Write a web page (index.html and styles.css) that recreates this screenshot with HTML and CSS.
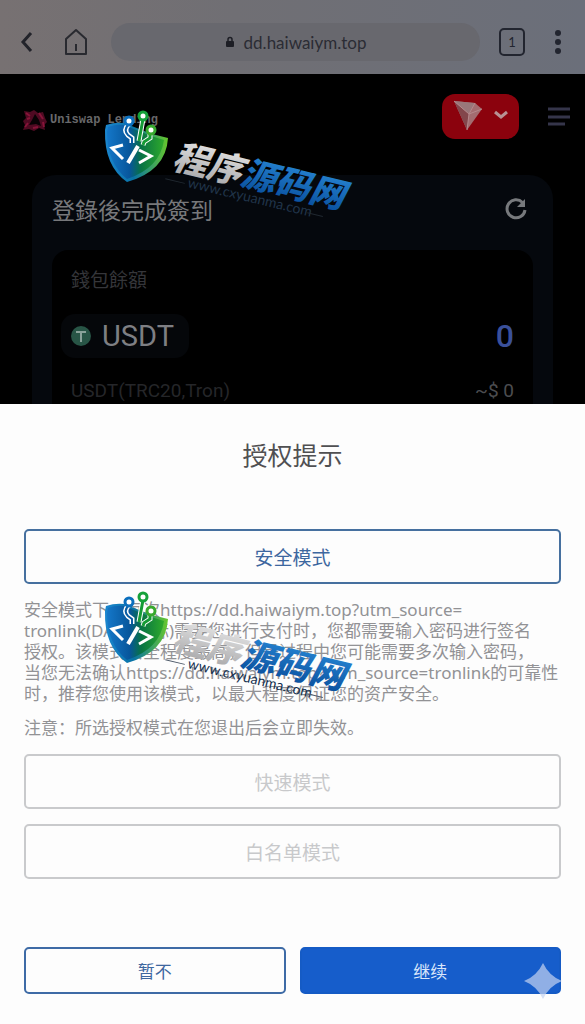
FILE: index.html
```html
<!DOCTYPE html>
<html lang="zh">

<head>
    <meta charset="UTF-8">
    <meta name="viewport" content="width=device-width, initial-scale=1.0">
    <title>授权提示</title>
    <link rel="stylesheet" href="styles.css">
</head>

<body>
    <header class="browser-bar">
        <button class="icon-btn" aria-label="返回">
            <svg width="14" height="22" viewBox="0 0 14 22"><path d="M11 2 3 11l8 9" fill="none" stroke="#22232a" stroke-width="3" /></svg>
        </button>
        <button class="icon-btn home" aria-label="主页">
            <svg width="24" height="28" viewBox="0 0 24 28"><path d="M2 11 12 2l10 9v15H2z" fill="none" stroke="#292a30" stroke-width="2" stroke-linejoin="round" /><path d="M12 16v7" stroke="#292a30" stroke-width="2" /></svg>
        </button>
        <div class="address">
            <svg width="10" height="12" viewBox="0 0 10 12"><path d="M3 5V3.5a2 2 0 0 1 4 0V5" fill="none" stroke="#1d1e25" stroke-width="1.5" /><rect x="1" y="5" width="8" height="6" rx="1" fill="#1d1e25" /></svg>
            <span>dd.haiwaiym.top</span>
        </div>
        <button class="tabs">1</button>
        <button class="icon-btn" aria-label="更多">
            <svg width="8" height="26" viewBox="0 0 8 26" fill="#22252f"><circle cx="4" cy="4" r="3" /><circle cx="4" cy="13" r="3" /><circle cx="4" cy="22" r="3" /></svg>
        </button>
    </header>

    <section class="app">
        <div class="app-header">
            <div class="brand">
                <svg width="26" height="24" viewBox="0 0 26 24">
                    <path d="M2 3l6 1 4-2 4 3 5-1 2 6 2 4-3 3 1 5-6-2-5 3-5-2-6 1 2-5-2-4 3-3z" fill="#4f0a22" />
                    <path d="M13 6l-3 6-3 5 7-1 5 2-2-6z" fill="#080205" />
                    <path d="M4 5l4 3M6 15l-3 4M17 5l4 6M21 14l1 5M11 20l5-1M5 11l3-1" stroke="#871439" stroke-width="2" />
                </svg>
                <span>Uniswap Lending</span>
            </div>
            <button class="network" aria-label="网络">
                <svg width="32" height="34" viewBox="0 0 32 34">
                    <path d="M2 3 23 5l7 6-15 21z" fill="#a36c70" />
                    <path d="M2 3l15 13-2 16z" fill="#83464b" />
                    <path d="M2 3l21 2-6 11z" fill="#99777a" />
                    <path d="M2 3l15 13 6-11M17 16l-2 16M17 16l13-5" fill="none" stroke="#b5898c" stroke-width="1" />
                </svg>
                <svg width="16" height="10" viewBox="0 0 16 10"><path d="M2 2l6 5 6-5" fill="none" stroke="#b79194" stroke-width="3" /></svg>
            </button>
            <button class="icon-btn" aria-label="菜单">
                <svg width="24" height="20" viewBox="0 0 24 20"><path d="M1 2h22M1 10h22M1 17h17" stroke="#35354a" stroke-width="3" /></svg>
            </button>
        </div>

        <div class="card">
            <div class="card-title">
                <h2>登錄後完成簽到</h2>
                <button class="icon-btn" aria-label="刷新">
                    <svg width="24" height="24" viewBox="0 0 24 24"><path d="M18.5 5.5A9 9 0 1 0 21 13" fill="none" stroke="#77797c" stroke-width="3" /><path d="M21 2v8h-8z" fill="#77797c" /></svg>
                </button>
            </div>
            <div class="wallet">
                <p class="wallet-label">錢包餘額</p>
                <div class="row">
                    <button class="token">
                        <svg width="20" height="22" viewBox="0 0 20 22"><ellipse cx="10" cy="11" rx="10" ry="10" fill="#285546" /><path d="M5 7h10M10 7v10" fill="none" stroke="#8aa29a" stroke-width="2" /></svg>
                        <span>USDT</span>
                    </button>
                    <span class="amount">0</span>
                </div>
                <div class="row small">
                    <span>USDT(TRC20,Tron)</span>
                    <span class="value">~$ 0</span>
                </div>
            </div>
        </div>
    </section>

    <main class="sheet">
        <h1>授权提示</h1>
        <button class="mode active">安全模式</button>
        <p class="desc">安全模式下，每次https://dd.haiwaiym.top?utm_source=<br>tronlink(DApp图标)需要您进行支付时，您都需要输入密码进行签名<br>授权。该模式安全程度最高，但是过程中您可能需要多次输入密码，<br>当您无法确认https://dd.haiwaiym.top?utm_source=tronlink的可靠性<br>时，推荐您使用该模式，以最大程度保证您的资产安全。</p>
        <p class="desc note">注意：所选授权模式在您退出后会立即失效。</p>
        <button class="mode" disabled>快速模式</button>
        <button class="mode" disabled>白名单模式</button>
        <div class="actions">
            <button class="cancel">暂不</button>
            <button class="confirm">继续</button>
        </div>
    </main>

    <svg class="sparkle" width="38" height="36" viewBox="0 0 38 36"><path d="M19 0Q25 13 38 18 25 23 19 36 13 23 0 18 13 13 19 0z" fill="#c5d3f0" fill-opacity=".7" /></svg>

    <svg class="watermark top" width="255" height="125" viewBox="0 0 255 125">
        <defs>
            <linearGradient id="shield" x1="0" y1="0" x2="1" y2="0">
                <stop offset="0" stop-color="#1477c9" />
                <stop offset=".4" stop-color="#07569b" />
                <stop offset=".6" stop-color="#087344" />
                <stop offset="1" stop-color="#2eaa2b" />
            </linearGradient>
            <linearGradient id="rim" x1="0" y1="0" x2="1" y2="0">
                <stop offset="0" stop-color="#1b86cf" />
                <stop offset=".45" stop-color="#0872a5" />
                <stop offset="1" stop-color="#67c82b" />
            </linearGradient>
            <linearGradient id="silver" x1="0" y1="0" x2="0" y2="1">
                <stop offset="0" stop-color="#ededed" />
                <stop offset="1" stop-color="#a4a4a6" />
            </linearGradient>
            <linearGradient id="blue" x1="0" y1="0" x2="0" y2="1">
                <stop offset="0" stop-color="#2b8ddb" />
                <stop offset="1" stop-color="#064a98" />
            </linearGradient>
            <g id="logo">
                <path d="M6 20Q15 17 24 18L52 29 68 33Q66 66 27 77 4 61 5 25z" fill="url(#rim)" />
                <path d="M8 22Q16 19 24 20L51 31 64 35Q60 63 27 74 7 58 7 27z" fill="url(#shield)" />
                <g fill="none" stroke="#fff" stroke-width="5">
                    <path d="M29 19q-6 6-1 11l4 3v5" />
                    <path d="M43 14l-4 22" />
                    <path d="M50 28v5l-6 4-1 3" />
                </g>
                <path d="M29 19q-6 6-1 11l4 3v5" fill="none" stroke="#0a5da4" stroke-width="2" />
                <path d="M43 14l-4 22M50 28v5l-6 4-1 3" fill="none" stroke="#159b35" stroke-width="3" />
                <circle cx="29" cy="16" r="4" fill="#fff" stroke="#0b6fbd" stroke-width="3" />
                <circle cx="43" cy="11" r="4" fill="#fff" stroke="#16a13a" stroke-width="3" />
                <circle cx="51" cy="25" r="4" fill="#fff" stroke="#38a92e" stroke-width="3" />
                <path d="M23 40 12 43l11 11M39 45l12 6-12 7" fill="none" stroke="#fff" stroke-width="3" />
                <path d="M38 41 28 58" stroke="#fff" stroke-width="4" />
                <g transform="translate(71 63) rotate(13.5)">
                    <text class="wm-name" x="0" y="0"><tspan fill="url(#silver)">程序</tspan><tspan fill="url(#blue)">源码网</tspan></text>
                </g>
            </g>
        </defs>
        <use href="#logo" />
        <g transform="translate(87 82) rotate(13.5)">
            <text class="wm-url">www.cxyuanma.com</text>
            <path d="M-23-3H-3M123-3h16" class="wm-line" />
        </g>
    </svg>

    <svg class="watermark bottom" width="255" height="125" viewBox="0 0 255 125">
        <use href="#logo" />
        <g transform="translate(87 82) rotate(13.5)">
            <text class="wm-url">www.cxyuanma.com</text>
            <path d="M-23-3H-3M123-3h16" class="wm-line" />
        </g>
    </svg>
</body>

</html>
```
FILE: styles.css
```css
* {
    box-sizing: border-box;
}

body {
    margin: 0;
    position: relative;
    min-height: 100vh;
    background: #fdfdfd;
    font-family: Lato, "Noto Sans CJK SC", sans-serif;
}

h1,
h2,
p {
    margin: 0;
    font-weight: 400;
}

button {
    font-family: inherit;
    cursor: pointer;
}

svg {
    display: block;
    flex-shrink: 0;
}

.icon-btn {
    padding: 0;
    border: none;
    background: none;
}

/* browser bar */
.browser-bar {
    display: flex;
    align-items: center;
    height: 74px;
    padding: 10px 23px 0 20px;
    background: linear-gradient(90deg, #777172, #706f74 40%, #6b6f7a);
}

.home {
    margin-left: 30px;
}

.address {
    flex: 1;
    display: flex;
    align-items: center;
    justify-content: center;
    gap: 9px;
    height: 38px;
    margin: 0 19px 0 23px;
    border-radius: 19px;
    background: #68686e;
    color: #2b2c34;
    font-size: 17px;
}

.tabs {
    width: 26px;
    height: 28px;
    margin-right: 29px;
    padding: 0;
    border: 2px solid #22252f;
    border-radius: 5px;
    background: none;
    color: #22252f;
    font-size: 13px;
}

/* dimmed page */
.app {
    padding: 20px 32px 0;
    background: #000;
}

.app-header {
    display: flex;
    align-items: center;
    margin: 0 -18px 36px -10px;
}

.brand {
    flex: 1;
    display: flex;
    align-items: center;
    gap: 2px;
    padding-top: 6px;
    color: #68686a;
    font-family: "Liberation Mono", monospace;
    font-size: 12px;
    font-weight: 700;
}

.network {
    display: flex;
    align-items: center;
    gap: 9px;
    height: 45px;
    margin-right: 28px;
    padding: 0 10px 4px;
    border: none;
    border-radius: 13px;
    background: #8b020d;
}

.card {
    padding: 0 20px;
    border-radius: 24px 24px 0 0;
    background: #05080d;
}

.card-title {
    display: flex;
    align-items: center;
    justify-content: space-between;
    height: 75px;
    padding: 0 5px 8px 0;
}

.card-title h2 {
    color: #77787b;
    font-family: "Noto Sans CJK TC", sans-serif;
    font-size: 23px;
}

.wallet {
    padding: 16px 19px 0;
    border-radius: 16px 16px 0 0;
    background: #000;
}

.wallet-label {
    color: #35363a;
    font-family: "Noto Sans CJK TC", sans-serif;
    font-size: 19px;
    line-height: 26px;
}

.row {
    display: flex;
    align-items: center;
    justify-content: space-between;
    margin-top: 22px;
}

.token {
    display: flex;
    align-items: center;
    gap: 11px;
    height: 44px;
    margin-left: -10px;
    padding: 0 15px 0 10px;
    border: none;
    border-radius: 14px;
    background: #05070a;
    color: #7e7f83;
    font-family: Roboto, sans-serif;
    font-size: 29px;
}

.amount {
    color: #3a509a;
    font-family: Roboto, sans-serif;
    font-size: 32px;
    font-weight: 500;
    line-height: 44px;
}

.row.small {
    margin-top: 20px;
    color: #252629;
    font-family: Roboto, sans-serif;
    font-size: 19px;
    line-height: 26px;
}

.small .value {
    color: #4c4d50;
}

/* bottom sheet */
.sheet {
    padding: 32px 24px 30px;
    background: #fdfdfd;
}

.sheet h1 {
    margin-bottom: 55px;
    color: #505052;
    font-size: 25px;
    line-height: 38px;
    text-align: center;
}

.mode {
    display: block;
    width: 100%;
    height: 55px;
    margin-bottom: 15px;
    padding-bottom: 2px;
    border: 2px solid #c9cacc;
    border-radius: 5px;
    background: #fdfdfd;
    color: #c8c9cb;
    font-size: 19px;
}

.mode.active {
    border-color: #46709f;
    color: #3d679f;
}

.desc {
    color: #929295;
    font-family: "Noto Sans", "Noto Sans CJK SC", sans-serif;
    font-size: 17px;
    line-height: 21px;
    white-space: nowrap;
}

.note {
    margin: 13px 0 16px;
}

.actions {
    display: flex;
    gap: 14px;
    margin-top: 68px;
}

.actions button {
    flex: 1;
    height: 47px;
    border: 2px solid #3e6ba6;
    border-radius: 5px;
    background: #fdfdfd;
    color: #3d679f;
    font-size: 17px;
}

.actions .confirm {
    border-color: #155bc5;
    background: #165dcb;
    color: #d9e6fb;
}

/* overlays */
.sparkle {
    position: absolute;
    top: 963px;
    right: 23px;
}

.watermark {
    position: absolute;
    left: 100px;
    pointer-events: none;
}

.watermark.top {
    top: 105px;
}

.watermark.bottom {
    top: 586px;
}

.wm-name {
    font: italic 900 35px "Noto Sans CJK SC", sans-serif;
}

.wm-url {
    font: 14px Lato, sans-serif;
    fill: #14304f;
}

.wm-line {
    stroke: #4c5868;
    stroke-width: 1;
}

.top .wm-url {
    fill: #203449;
}

.top .wm-line {
    stroke: #202830;
}
```
